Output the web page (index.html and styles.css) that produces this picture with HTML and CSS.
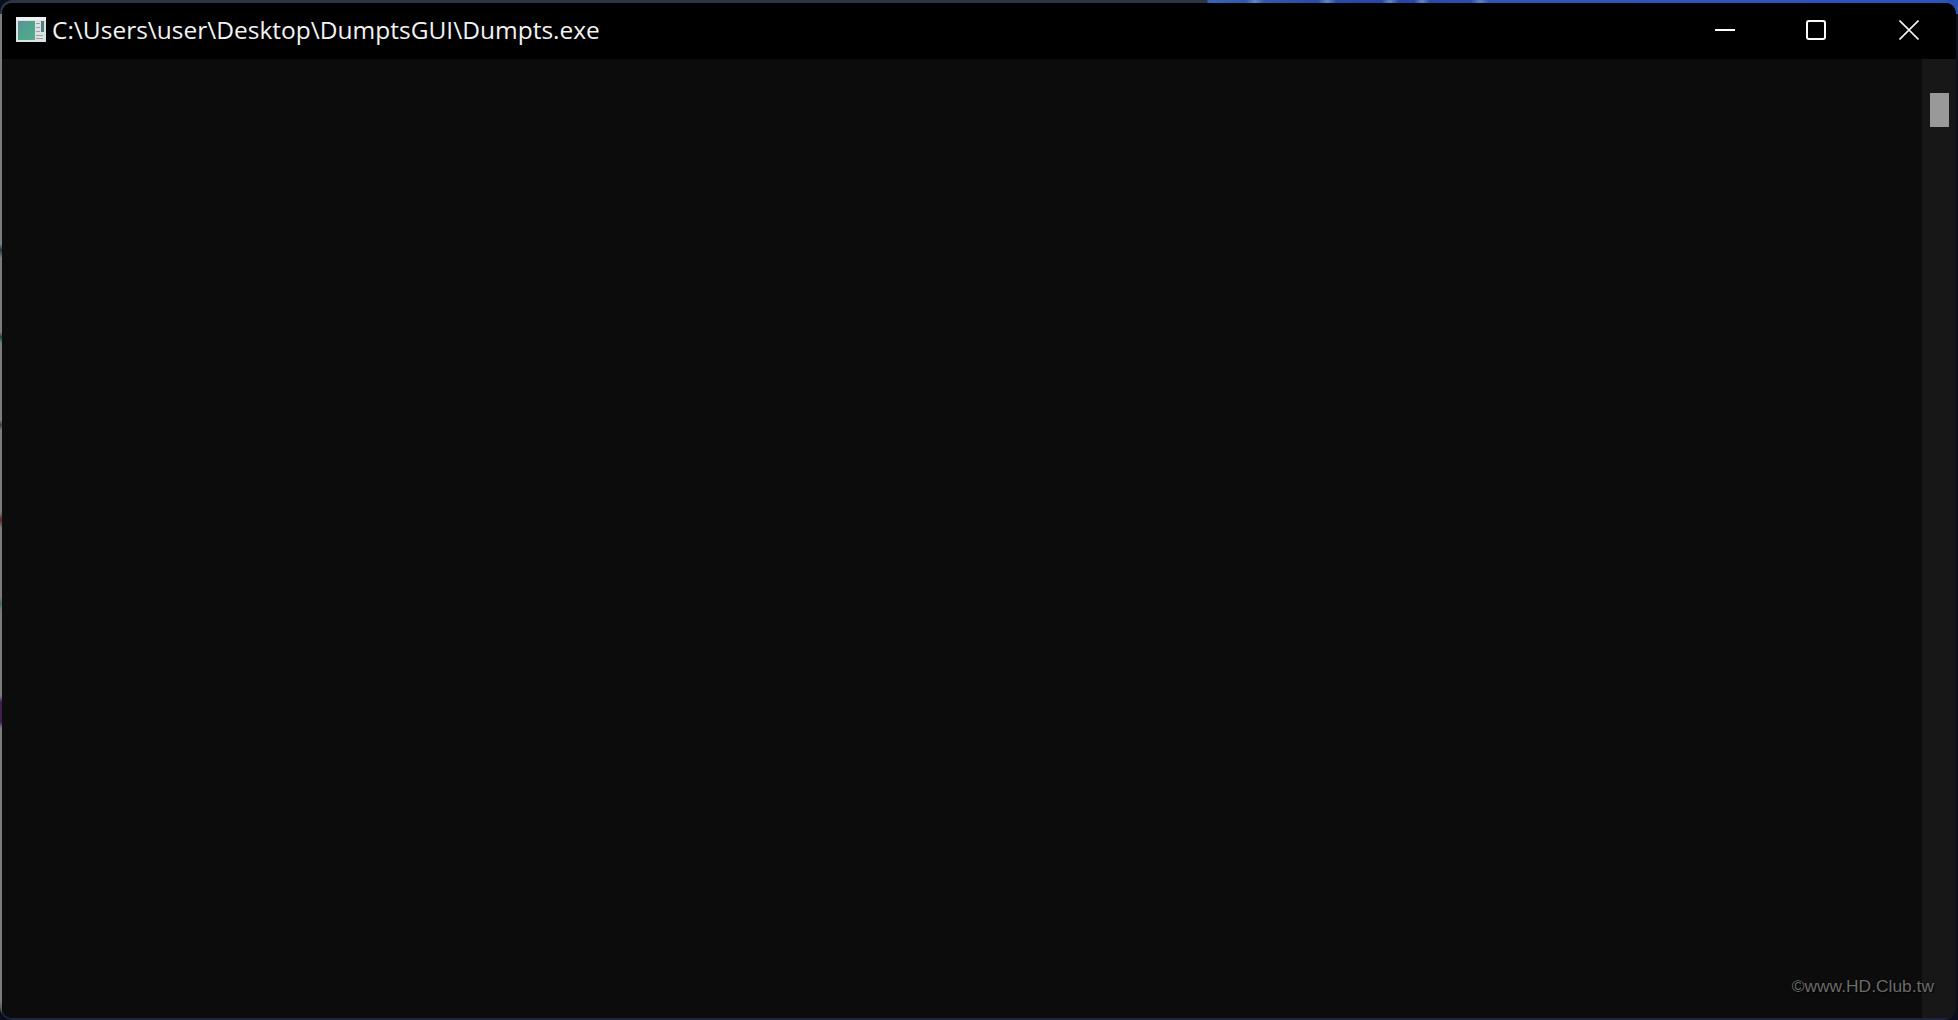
FILE: index.html
```html
<!DOCTYPE html>
<html lang="en">
<head>
<meta charset="utf-8">
<title>Dumpts.exe</title>
<link rel="stylesheet" href="styles.css">
</head>
<body>
<div class="desktop">
  <div class="frame">
    <div class="window">
      <header class="titlebar">
        <svg class="app-icon" width="30" height="25" viewBox="0 0 30 25">
          <defs>
            <linearGradient id="pane" x1="0" y1="0" x2="1" y2="1">
              <stop offset="0" stop-color="#5f8f9f"/>
              <stop offset="0.55" stop-color="#4fa58c"/>
              <stop offset="1" stop-color="#58a98e"/>
            </linearGradient>
          </defs>
          <rect x="0" y="0" width="30" height="25" fill="#dbe2e2"/>
          <rect x="0" y="0" width="30" height="3" fill="#eef2f2"/>
          <rect x="2" y="4" width="17" height="19" fill="url(#pane)"/>
          <rect x="25" y="4" width="3" height="11" fill="#5d7882"/>
          <rect x="20" y="6" width="4" height="1" fill="#93a3a6"/>
          <rect x="20" y="10" width="4" height="1" fill="#93a3a6"/>
          <rect x="20" y="14" width="4" height="1" fill="#93a3a6"/>
          <rect x="20" y="18" width="7" height="1" fill="#93a3a6"/>
          <rect x="20" y="21" width="7" height="1" fill="#93a3a6"/>
        </svg>
        <span class="title">C:\Users\user\Desktop\DumptsGUI\Dumpts.exe</span>
        <div class="controls">
          <svg class="ctrl ctrl-min" width="20" height="20" viewBox="0 0 20 20"><path d="M0 10H20" stroke="#fff" stroke-width="2" fill="none"/></svg>
          <svg class="ctrl ctrl-max" width="20" height="20" viewBox="0 0 20 20"><rect x="1" y="1" width="18" height="18" rx="2" stroke="#fff" stroke-width="2" fill="none"/></svg>
          <svg class="ctrl ctrl-close" width="20" height="20" viewBox="0 0 20 20"><path d="M0.5 0.5L19.5 19.5M19.5 0.5L0.5 19.5" stroke="#f4f4f4" stroke-width="1.6" fill="none"/></svg>
        </div>
      </header>
      <main class="body">
        <div class="console">
          <span class="watermark">©www.HD.Club.tw</span>
        </div>
        <div class="scrollbar"><div class="thumb"></div></div>
      </main>
    </div>
  </div>
</div>
</body>
</html>
```
FILE: styles.css
```css
html, body {
  margin: 0;
  padding: 0;
  height: 100%;
  background: #0a0e1c;
  overflow: hidden;
}
.desktop {
  width: 1958px;
  height: 1020px;
  box-sizing: border-box;
  padding: 0 2px 0 0;
  background:
    linear-gradient(90deg, #1a2a66 0, #2a50b8 100%) top right / 40px 14px no-repeat,
    #0a0e1c;
}
.frame {
  height: 100%;
  box-sizing: border-box;
  padding: 3px 0 2px 2px;
  border-radius: 13px;
  overflow: hidden;
  background:
    linear-gradient(90deg,
      #2c3546 0, #2c3546 1207px,
      #3a62b4 1208px, #3058b0 1246px,
      #5f88c4 1255px, #3158ae 1264px,
      #2c4aa8 1318px, #5f88c4 1327px, #2c4aa8 1336px,
      #2c44a6 1381px, #5f88c4 1390px, #2c44a6 1399px,
      #2e42a8 1414px, #5f88c4 1422px, #2e48aa 1430px,
      #2c4cae 1471px, #5a84c2 1480px, #2e55b8 1489px,
      #2b55bb 100%) top left / 100% 14px no-repeat,
    linear-gradient(180deg,
      #7c7c7c 0, #7c7c7c 244px,
      #1f3a46 250px, #7c7c7c 258px,
      #7c7c7c 332px, #1f4650 337px, #7c7c7c 343px,
      #7c7c7c 420px, #3a3f4a 425px, #7c7c7c 430px,
      #7c7c7c 512px, #5a2a2e 520px, #7c7c7c 528px,
      #7c7c7c 598px, #3f6a6a 603px, #7c7c7c 610px,
      #7c7c7c 696px, #3f1f50 702px, #3f1f50 722px, #7c7c7c 728px,
      #7c7c7c 1000px, #2a3040 1020px) top left / 2px 100% no-repeat,
    #1c2540;
}
.window {
  height: 100%;
  display: flex;
  flex-direction: column;
  border-radius: 10px;
  overflow: hidden;
  background: #0c0c0c;
}
.titlebar {
  height: 56px;
  flex: none;
  display: flex;
  align-items: center;
  background: #000;
  padding-left: 14px;
}
.app-icon {
  flex: none;
  margin-top: -3px;
}
.title {
  margin-left: 6px;
  margin-top: -3px;
  font: 24.5px/30px "Open Sans", "Noto Sans", sans-serif;
  color: #f2f2f2;
  white-space: nowrap;
}
.controls {
  margin-left: auto;
  display: flex;
  padding-right: 37px;
  margin-top: -2px;
}
.ctrl-max {
  margin-left: 71px;
}
.ctrl-close {
  margin-left: 73px;
}
.body {
  flex: 1;
  display: flex;
  min-height: 0;
}
.console {
  flex: 1;
  position: relative;
  background: #0c0c0c;
}
.scrollbar {
  width: 34px;
  flex: none;
  background: #171717;
  padding: 34px 0 0 8px;
  box-sizing: border-box;
}
.thumb {
  width: 19px;
  height: 34px;
  background: #999;
}
.watermark {
  position: absolute;
  right: -12px;
  bottom: 22px;
  font: 17.4px/20px "Liberation Sans", sans-serif;
  color: #6a6a6a;
  text-shadow: 1px 1px 1px #000;
}
```
